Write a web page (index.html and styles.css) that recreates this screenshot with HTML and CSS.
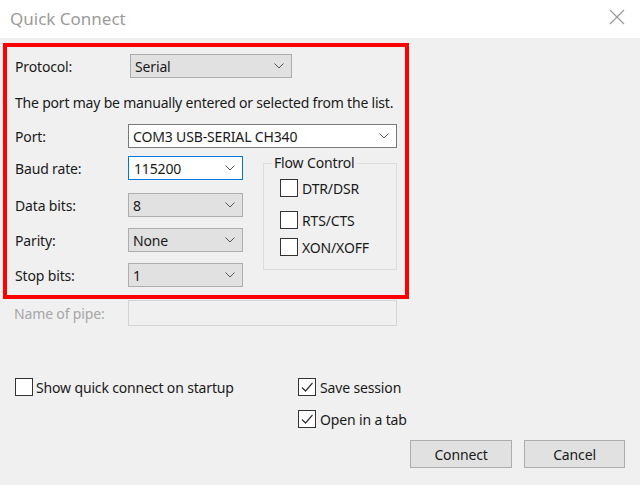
FILE: index.html
```html
<!DOCTYPE html>
<html lang="en">
<head>
<meta charset="utf-8">
<title>Quick Connect</title>
<link rel="stylesheet" href="styles.css">
</head>
<body>
<div class="titlebar">
  <span class="title">Quick Connect</span>
  <svg class="close" width="16" height="16" viewBox="0 0 16 16"><path d="M1 1 L15 15 M15 1 L1 15" stroke="#9a9a9a" stroke-width="1.2" fill="none"/></svg>
</div>
<div class="dialog">
  <div class="frame">
    <div class="row row-protocol">
      <span class="label label-protocol">Protocol:</span>
      <div class="select gray sel-protocol"><span>Serial</span><svg class="chev" width="10" height="6" viewBox="0 0 10 6"><path d="M0.5 0.5 L5 5 L9.5 0.5" stroke="#555" stroke-width="1" fill="none"/></svg></div>
    </div>
    <p class="hint">The port may be manually entered or selected from the list.</p>
    <div class="row row-port">
      <span class="label">Port:</span>
      <div class="select white sel-port"><span>COM3 USB-SERIAL CH340</span><svg class="chev" width="10" height="6" viewBox="0 0 10 6"><path d="M0.5 0.5 L5 5 L9.5 0.5" stroke="#555" stroke-width="1" fill="none"/></svg></div>
    </div>
    <div class="lower">
      <div class="fields">
        <div class="row">
          <span class="label">Baud rate:</span>
          <div class="select white focused sel-small"><span>115200</span><svg class="chev" width="10" height="6" viewBox="0 0 10 6"><path d="M0.5 0.5 L5 5 L9.5 0.5" stroke="#555" stroke-width="1" fill="none"/></svg></div>
        </div>
        <div class="row row-data">
          <span class="label">Data bits:</span>
          <div class="select gray sel-small"><span>8</span><svg class="chev" width="10" height="6" viewBox="0 0 10 6"><path d="M0.5 0.5 L5 5 L9.5 0.5" stroke="#555" stroke-width="1" fill="none"/></svg></div>
        </div>
        <div class="row row-next">
          <span class="label">Parity:</span>
          <div class="select gray sel-small"><span>None</span><svg class="chev" width="10" height="6" viewBox="0 0 10 6"><path d="M0.5 0.5 L5 5 L9.5 0.5" stroke="#555" stroke-width="1" fill="none"/></svg></div>
        </div>
        <div class="row row-next">
          <span class="label">Stop bits:</span>
          <div class="select gray sel-small"><span>1</span><svg class="chev" width="10" height="6" viewBox="0 0 10 6"><path d="M0.5 0.5 L5 5 L9.5 0.5" stroke="#555" stroke-width="1" fill="none"/></svg></div>
        </div>
      </div>
      <fieldset class="flow">
        <legend>Flow Control</legend>
        <div class="check flow-check"><span class="box"></span><span>DTR/DSR</span></div>
        <div class="check flow-check flow-second"><span class="box"></span><span>RTS/CTS</span></div>
        <div class="check flow-check flow-third"><span class="box"></span><span>XON/XOFF</span></div>
      </fieldset>
    </div>
  </div>
  <div class="row row-pipe">
    <span class="label label-pipe">Name of pipe:</span>
    <div class="input-disabled"></div>
  </div>
  <div class="options">
    <div class="check opt-show"><span class="box"></span><span>Show quick connect on startup</span></div>
    <div class="opt-right">
      <div class="check"><span class="box checked"><svg width="16" height="16" viewBox="0 0 16 16"><path d="M3 8.5 L6.5 12 L13.5 4" stroke="#333" stroke-width="1.2" fill="none"/></svg></span><span>Save session</span></div>
      <div class="check opt-tab"><span class="box checked"><svg width="16" height="16" viewBox="0 0 16 16"><path d="M3 8.5 L6.5 12 L13.5 4" stroke="#333" stroke-width="1.2" fill="none"/></svg></span><span>Open in a tab</span></div>
    </div>
  </div>
  <div class="buttons">
    <div class="btn btn-connect">Connect</div>
    <div class="btn btn-cancel">Cancel</div>
  </div>
</div>
</body>
</html>
```

FILE: styles.css
```css
* { box-sizing: border-box; }
html, body { margin: 0; padding: 0; }
body {
  width: 640px;
  height: 485px;
  background: #f0f0f0;
  font-family: "Noto Sans", "Open Sans", sans-serif;
  font-size: 14px;
  letter-spacing: -0.15px;
  color: #1a1a1a;
  overflow: hidden;
}
.titlebar {
  height: 38px;
  background: #ffffff;
  display: flex;
  align-items: center;
  justify-content: space-between;
  padding: 0 15px 0 10px;
}
.title {
  font-size: 17px;
  letter-spacing: 0;
  color: #9b9b9b;
  margin-top: -2px;
}
.close { margin-top: -4px; }
.dialog { display: flex; flex-direction: column; }
.frame {
  margin: 5px 0 0 3px;
  width: 406px;
  height: 256px;
  border: 4px solid #ff0000;
  padding: 7px 0 0 8px;
}
.row {
  display: flex;
  align-items: center;
  height: 24px;
}
.label { width: 113px; flex: none; white-space: nowrap; }
.label-protocol { width: 115px; }
.select {
  position: relative;
  height: 24px;
  display: flex;
  align-items: center;
  justify-content: space-between;
  padding: 0 7px 0 4px;
  border: 1px solid #adadad;
  white-space: nowrap;
}
.select.gray { background: #e1e1e1; }
.select.white { background: #ffffff; border-color: #7a7a7a; }
.select.focused { border-color: #0078d7; padding-left: 5px; }
.sel-protocol { width: 162px; }
.sel-port { width: 269px; }
.sel-small { width: 115px; }
.hint {
  margin: 15px 0 0 0;
  line-height: 20px;
  white-space: nowrap;
  letter-spacing: -0.2px;
}
.row-port { margin-top: 11px; }
.lower {
  display: flex;
  align-items: flex-start;
  margin-top: 8px;
}
.fields { width: 228px; flex: none; display: flex; flex-direction: column; }
.row-data { margin-top: 13px; }
.row-next { margin-top: 11px; }
.flow {
  margin: -3px 0 0 20px;
  width: 134px;
  height: 117px;
  border: 1px solid #dcdcdc;
  padding: 6px 0 0 16px;
}
.flow legend {
  padding: 0 2px;
  margin-left: -8px;
  line-height: 20px;
}
.check {
  display: flex;
  align-items: center;
  gap: 4px;
  height: 18px;
  white-space: nowrap;
}
.box {
  width: 18px;
  height: 18px;
  flex: none;
  border: 1px solid #333;
  background: #fff;
  display: flex;
  align-items: center;
  justify-content: center;
}
.flow-second { margin-top: 14px; }
.flow-third { margin-top: 9px; }
.row-pipe {
  margin-top: 1px;
  padding-left: 14px;
  height: 26px;
}
.label-pipe { width: 114px; color: #a6a6a6; }
.input-disabled {
  width: 269px;
  height: 26px;
  border: 1px solid #d4d4d4;
  background: #f0f0f0;
}
.options {
  display: flex;
  margin-top: 52px;
}
.opt-show { margin-left: 15px; margin-top: 0; width: 283px; gap: 3px; }
.opt-right { display: flex; flex-direction: column; }
.opt-tab { margin-top: 14px; }
.buttons {
  display: flex;
  justify-content: flex-end;
  gap: 12px;
  margin-top: 12px;
  padding-right: 15px;
}
.btn {
  height: 28px;
  background: #e1e1e1;
  border: 1px solid #adadad;
  display: flex;
  align-items: center;
  justify-content: center;
}
.btn-connect { width: 102px; }
.btn-cancel { width: 101px; }
```
